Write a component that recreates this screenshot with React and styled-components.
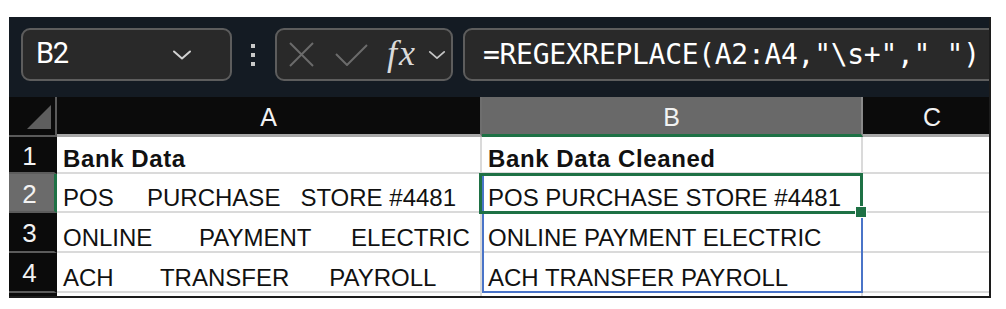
import React from 'react';
import styled, { createGlobalStyle } from 'styled-components';

const Global = createGlobalStyle`
  html, body { margin: 0; padding: 0; background: #ffffff; }
  body { font-family: "Liberation Sans", Arial, sans-serif; }
`;

const Page = styled.div`
  padding: 17px 0 0 9px;
`;

const Frame = styled.div`
  width: 982px;
  height: 281px;
  box-sizing: border-box;
  border-right: 2px solid #1c1c1c;
  border-bottom: 2px solid #1c1c1c;
  overflow: hidden;
  display: flex;
  flex-direction: column;
  background: #0b0b0b;
`;

const Toolbar = styled.div`
  flex-shrink: 0;
  height: 80px;
  box-sizing: border-box;
  padding: 11px 0 0 12px;
  background: #141b23;
  display: flex;
  align-items: flex-start;
`;

const Box = styled.div`
  flex-shrink: 0;
  height: 53px;
  box-sizing: border-box;
  border: 2px solid #5d5d5d;
  border-radius: 9px;
  background: #292929;
  display: flex;
  align-items: center;
`;

const NameBox = styled(Box)`
  width: 211px;
  padding: 0 38px 0 13px;
  justify-content: space-between;
`;

const NameText = styled.span`
  font-family: Roboto, "Liberation Sans", sans-serif;
  font-size: 29px;
  letter-spacing: -1.4px;
  color: #ffffff;
  line-height: 1;
  padding-bottom: 2px;
`;

const Dots = styled.div`
  display: flex;
  flex-direction: column;
  gap: 5px;
  margin: 16px 20px 0 19px;
`;

const Dot = styled.span`
  width: 4px;
  height: 4px;
  background: #c9c9c9;
`;

const FxBox = styled(Box)`
  width: 178px;
  padding-left: 12px;
`;

const IconSlot = styled.span`
  display: flex;
  margin-right: ${(p) => p.$gap}px;
`;

const FxLabel = styled.span`
  width: 31px;
  margin-right: 10px;
  font-family: "Liberation Serif", "Times New Roman", serif;
  font-style: italic;
  font-size: 36px;
  letter-spacing: 2px;
  line-height: 1;
  color: #dadada;
  padding-bottom: 4px;
`;

const FormulaBox = styled(Box)`
  margin-left: 10px;
  width: 600px;
  padding-left: 18px;
`;

const FormulaText = styled.span`
  font-family: "DejaVu Sans Mono", "Liberation Mono", monospace;
  font-size: 28px;
  letter-spacing: -0.3px;
  color: #ffffff;
  white-space: pre;
  line-height: 1;
`;

const Sheet = styled.div`
  flex: 1;
  display: grid;
  grid-template-columns: 48px 425px 381px 140px;
  grid-template-rows: 40px 37px 39px 40px 40px 1fr;
  background: #ffffff;
`;

const Corner = styled.div`
  grid-row: 1;
  grid-column: 1;
  background: #0b0b0b;
  border-right: 2px solid #5a5a5a;
  border-bottom: 2px solid #5a5a5a;
  display: flex;
  align-items: flex-end;
  justify-content: flex-end;
  padding: 0 4px 6px 0;
`;

const Triangle = styled.span`
  width: 24px;
  height: 24px;
  background: #5e5e5e;
  clip-path: polygon(100% 0, 100% 100%, 0 100%);
`;

const ColHeader = styled.div`
  grid-row: 1;
  grid-column: ${(p) => p.$col};
  background: ${(p) => (p.$selected ? '#696969' : '#0b0b0b')};
  border-right: 2px solid ${(p) => (p.$selected ? '#8a8a8a' : '#6e6e6e')};
  border-bottom: 3px solid ${(p) => (p.$selected ? '#1e7145' : '#a8a8a8')};
  color: #f2f2f2;
  font-size: 25px;
  display: flex;
  align-items: center;
  justify-content: center;
  padding-top: 3px;
`;

const RowHeader = styled.div`
  grid-row: ${(p) => p.$row};
  grid-column: 1;
  background: ${(p) => (p.$selected ? '#6b6b6b' : '#0b0b0b')};
  border-bottom: 2px solid #5c5c5c;
  border-right: 3px solid ${(p) => (p.$selected ? '#1e7145' : '#0b0b0b')};
  color: #f2f2f2;
  font-size: 26px;
  display: flex;
  align-items: center;
  justify-content: center;
  padding: 3px 4px 0 0;
`;

const Cell = styled.div`
  grid-row: ${(p) => p.$row};
  grid-column: ${(p) => p.$col};
  background: #ffffff;
  border-right: 2px solid #dadada;
  border-bottom: 2px solid #dadada;
  display: flex;
  align-items: flex-end;
  padding: 0 0 1px 6px;
  font-size: 24px;
  line-height: 24px;
  font-weight: ${(p) => (p.$bold ? 700 : 400)};
  letter-spacing: ${(p) => (p.$bold ? '0.6px' : '0')};
  color: #111111;
  white-space: pre;
  min-width: 0;
`;

const RangeFrame = styled.div`
  grid-column: 3;
  grid-row: 3 / 6;
  border: 2px solid #4a74c8;
  z-index: 1;
  pointer-events: none;
`;

const SelectionFrame = styled.div`
  grid-column: 3;
  grid-row: 3;
  margin: -1px 0 -1px -3px;
  border: 3px solid #1e7145;
  position: relative;
  z-index: 2;
  pointer-events: none;
`;

const FillHandle = styled.span`
  position: absolute;
  right: -6px;
  bottom: -6px;
  width: 10px;
  height: 10px;
  background: #1e7145;
  box-shadow: 0 0 0 1px #ffffff;
`;

const Chevron = ({ w, h, color }) => (
  <svg width={w} height={h} viewBox="0 0 20 10" fill="none">
    <polyline points="2,1.5 10,8.5 18,1.5" stroke={color} strokeWidth="2" strokeLinecap="round" strokeLinejoin="round" />
  </svg>
);

const CrossIcon = () => (
  <svg width="25" height="25" viewBox="0 0 25 25" fill="none">
    <path d="M1 1 L24 24 M24 1 L1 24" stroke="#6b6b6b" strokeWidth="2" />
  </svg>
);

const CheckIcon = () => (
  <svg width="33" height="22" viewBox="0 0 33 22" fill="none">
    <polyline points="1,10 12,21 32,1" stroke="#6b6b6b" strokeWidth="2" />
  </svg>
);

const rows = [
  { n: '1', a: 'Bank Data', b: 'Bank Data Cleaned', bold: true },
  { n: '2', a: 'POS     PURCHASE   STORE #4481', b: 'POS PURCHASE STORE #4481', selected: true },
  { n: '3', a: 'ONLINE       PAYMENT      ELECTRIC', b: 'ONLINE PAYMENT ELECTRIC' },
  { n: '4', a: 'ACH       TRANSFER      PAYROLL', b: 'ACH TRANSFER PAYROLL' },
  { n: '', a: '', b: '' },
];

export default function App() {
  return (
    <Page>
      <Global />
      <Frame>
        <Toolbar>
          <NameBox>
            <NameText>B2</NameText>
            <Chevron w={20} h={10} color="#d2d2d2" />
          </NameBox>
          <Dots>
            <Dot />
            <Dot />
            <Dot />
          </Dots>
          <FxBox>
            <IconSlot $gap={21}><CrossIcon /></IconSlot>
            <IconSlot $gap={19}><CheckIcon /></IconSlot>
            <FxLabel>fx</FxLabel>
            <Chevron w={18} h={10} color="#c4c4c4" />
          </FxBox>
          <FormulaBox>
            <FormulaText>{'=REGEXREPLACE(A2:A4,"\\s+"," ")'}</FormulaText>
          </FormulaBox>
        </Toolbar>
        <Sheet>
          <Corner><Triangle /></Corner>
          <ColHeader $col={2}>A</ColHeader>
          <ColHeader $col={3} $selected>B</ColHeader>
          <ColHeader $col={4}>C</ColHeader>
          {rows.map((r, i) => (
            <React.Fragment key={i}>
              <RowHeader $row={i + 2} $selected={r.selected}>{r.n}</RowHeader>
              <Cell $row={i + 2} $col={2} $bold={r.bold}>{r.a}</Cell>
              <Cell $row={i + 2} $col={3} $bold={r.bold}>{r.b}</Cell>
              <Cell $row={i + 2} $col={4} />
            </React.Fragment>
          ))}
          <RangeFrame />
          <SelectionFrame>
            <FillHandle />
          </SelectionFrame>
        </Sheet>
      </Frame>
    </Page>
  );
}
